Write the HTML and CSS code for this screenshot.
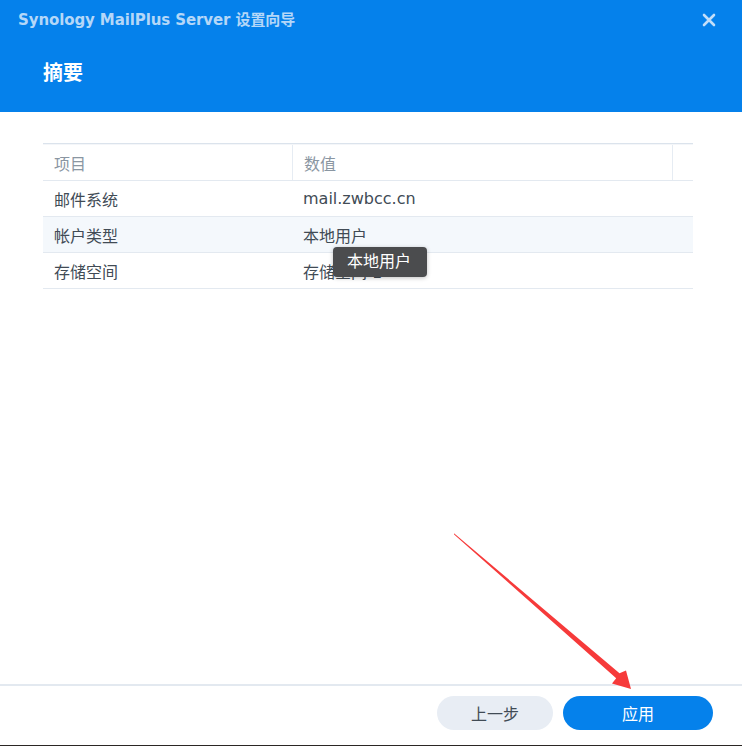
FILE: index.html
```html
<!DOCTYPE html>
<html lang="zh-CN">
<head>
  <meta charset="UTF-8">
  <title>Synology MailPlus Server 设置向导</title>
  <link rel="stylesheet" href="styles.css">
</head>
<body>

  <div class="wizard">
    <div class="wizard-header">
      <div class="title-bar">
        <span class="window-title">Synology MailPlus Server 设置向导</span>
        <span class="close-button">
          <svg width="14" height="14" viewBox="0 0 14 14">
            <path d="M2 2 L12 12 M12 2 L2 12" stroke="currentColor" stroke-width="2.6" stroke-linecap="round"/>
          </svg>
        </span>
      </div>
      <h1>摘要</h1>
    </div>

    <div class="wizard-body">
      <div class="summary-grid">
        <div class="grid-row grid-head">
          <div class="cell col-item">项目</div>
          <div class="cell col-value">数值</div>
          <div class="cell col-spacer"></div>
        </div>
        <div class="grid-row">
          <div class="cell col-item">邮件系统</div>
          <div class="cell col-value">mail.zwbcc.cn</div>
        </div>
        <div class="grid-row hovered">
          <div class="cell col-item">帐户类型</div>
          <div class="cell col-value">本地用户</div>
        </div>
        <div class="grid-row">
          <div class="cell col-item">存储空间</div>
          <div class="cell col-value">存储空间 1</div>
        </div>
      </div>

      <!-- tooltip shown over the hovered cell -->
      <div class="tooltip">本地用户</div>
    </div>

    <div class="wizard-footer">
      <button class="btn btn-secondary">上一步</button>
      <button class="btn btn-primary">应用</button>
    </div>
  </div>
  <div class="desktop-edge"></div>

  <!-- annotation arrow drawn on top of the screenshot -->
  <svg class="annotation" width="742" height="746" viewBox="0 0 742 746">
    <polygon points="454,533.2 619.5,673.2 626,670.5 631,689 612,683.6 616.2,678.2 454.1,534.6" fill="#f63a3a"/>
  </svg>

</body>
</html>
```

FILE: styles.css
```css
/* Global Styles */
* {
  margin: 0;
  padding: 0;
  box-sizing: border-box;
}

body {
  font-family: 'DejaVu Sans', 'Noto Sans CJK SC', sans-serif;
  width: 742px;
  height: 746px;
  overflow: hidden;
  background: #fff;
  color: #414b55;
  position: relative;
}

.wizard {
  height: 745px;
  display: flex;
  flex-direction: column;
  background: #fff;
}

.desktop-edge {
  height: 1px;
  background: #2b2724;
}

/* Header */
.wizard-header {
  height: 112px;
  background: #0581eb;
  padding: 0 0 0 18px;
}

.title-bar {
  display: flex;
  align-items: center;
  justify-content: space-between;
  height: 38px;
  padding-right: 26px;
}

.window-title {
  font-size: 15px;
  font-weight: bold;
  color: #b4d7f8;
  letter-spacing: -0.1px;
  margin-top: -1px;
}

.close-button {
  display: flex;
  color: #c2def9;
  margin-top: 1px;
}

.wizard-header h1 {
  font-size: 20px;
  font-weight: bold;
  color: #fff;
  margin: 22px 0 0 25px;
  line-height: 27px;
}

/* Body */
.wizard-body {
  flex: 1;
  padding: 31px 49px 0 43px;
  position: relative;
}

.summary-grid {
  border-top: 1px solid #dbe3ec;
  font-size: 16px;
}

.grid-row {
  display: flex;
  height: 36px;
  border-bottom: 1px solid #e3e9f0;
}

.grid-row.hovered {
  background: #f4f8fc;
}

.grid-head {
  height: 37px;
  color: #8a96a2;
  border-top: 1px solid #f4f6f9;
}

.cell {
  display: flex;
  align-items: center;
  padding-left: 11px;
}

.col-item {
  width: 249px;
}

.col-value {
  flex: 1;
}

.grid-head .col-value {
  border-left: 1px solid #e6ecf3;
}

.col-spacer {
  width: 21px;
  flex: none;
  border-left: 1px solid #e6ecf3;
}

.tooltip {
  position: absolute;
  left: 333px;
  top: 135px;
  width: 94px;
  height: 30px;
  background: #4b4c4e;
  color: #fff;
  font-size: 16px;
  border-radius: 4px;
  padding-left: 14px;
  line-height: 30px;
  box-shadow: 0 1px 4px rgba(0, 0, 0, 0.25);
}

/* Footer */
.wizard-footer {
  height: 61px;
  border-top: 2px solid #e3e9f0;
  display: flex;
  justify-content: flex-end;
  align-items: flex-start;
  gap: 10px;
  padding: 10px 29px 0 0;
}

.btn {
  height: 34px;
  border: none;
  border-radius: 17px;
  font-family: 'DejaVu Sans', 'Noto Sans CJK SC', sans-serif;
  font-size: 16px;
  cursor: pointer;
}

.btn-secondary {
  width: 116px;
  background: #e8edf4;
  color: #414b55;
}

.btn-primary {
  width: 150px;
  background: #0581eb;
  color: #fff;
}

.annotation {
  position: absolute;
  left: 0;
  top: 0;
  pointer-events: none;
}
```
